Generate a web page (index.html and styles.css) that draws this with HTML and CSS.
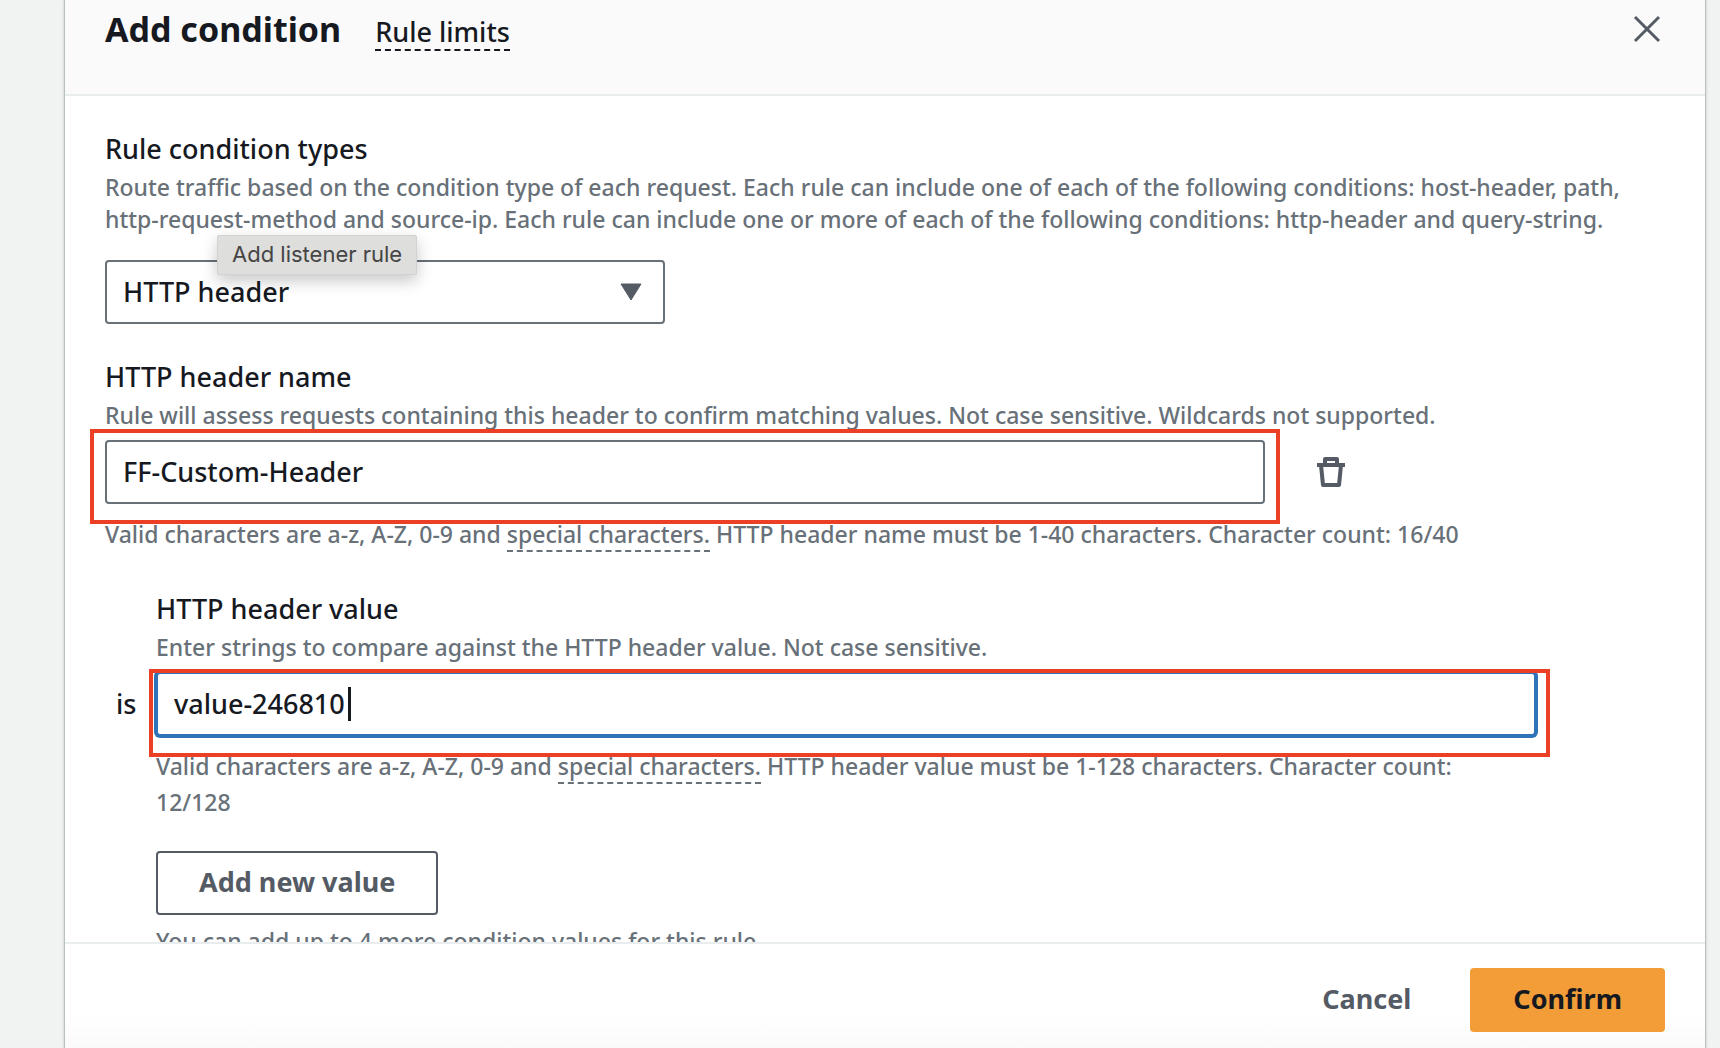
FILE: index.html
```html
<!DOCTYPE html>
<html lang="en">
<head>
<meta charset="utf-8">
<title>Add condition</title>
<link rel="stylesheet" href="styles.css">
</head>
<body>
<div class="modal" role="dialog" aria-labelledby="modal-title">
  <header class="modal-header">
    <h1 class="modal-title" id="modal-title">Add condition</h1>
    <a class="term term-dark" href="#limits">Rule limits</a>
    <button class="icon-button close" type="button" aria-label="Close">
      <svg width="28" height="28" viewBox="0 0 28 28"><path d="M2 2l24 24M26 2L2 26" fill="none" stroke="currentColor" stroke-width="3"/></svg>
    </button>
  </header>

  <main class="modal-body">
    <section class="field">
      <label class="label" for="type">Rule condition types</label>
      <p class="description">Route traffic based on the condition type of each request. Each rule can include one of each of the following conditions: host-header, path,<br>http-request-method and source-ip. Each rule can include one or more of each of the following conditions: http-header and query-string.</p>
      <div class="select-wrap">
        <select class="control" id="type"><option>HTTP header</option></select>
        <svg class="caret-down" width="22" height="18" viewBox="0 0 22 18"><path d="M1 1h20l-10 16z" fill="currentColor" stroke="currentColor" stroke-linejoin="round"/></svg>
        <div class="tooltip" role="tooltip">Add listener rule</div>
      </div>
    </section>

    <section class="field">
      <label class="label" for="name">HTTP header name</label>
      <p class="description">Rule will assess requests containing this header to confirm matching values. Not case sensitive. Wildcards not supported.</p>
      <div class="name-row">
        <div class="input-wrap">
          <input class="control" id="name" type="text" value="FF-Custom-Header">
          <span class="highlight highlight-name"></span>
        </div>
        <button class="icon-button" type="button" aria-label="Remove">
          <svg width="28" height="30" viewBox="0 0 28 30" fill="none" stroke="currentColor" stroke-width="4" stroke-linejoin="round"><path d="M0 8h28M8 8V2h12v6M4 8l2 20h16l2-20"/></svg>
        </button>
      </div>
      <p class="hint">Valid characters are a-z, A-Z, 0-9 and <a class="term" href="#chars">special characters.</a> HTTP header name must be 1-40 characters. Character count: 16/40</p>
    </section>

    <section class="value-group">
      <label class="label" for="value">HTTP header value</label>
      <p class="description">Enter strings to compare against the HTTP header value. Not case sensitive.</p>
      <span class="operator">is</span>
      <div class="input-wrap">
        <input class="control focused" id="value" type="text" value="value-246810">
        <span class="text-cursor"></span>
        <span class="highlight highlight-value"></span>
      </div>
      <p class="hint">Valid characters are a-z, A-Z, 0-9 and <a class="term" href="#chars">special characters.</a> HTTP header value must be 1-128 characters. Character count:<br>12/128</p>
      <button class="button button-normal" type="button">Add new value</button>
      <p class="hint more">You can add up to 4 more condition values for this rule.</p>
    </section>
  </main>

  <footer class="modal-footer">
    <button class="button button-link" type="button">Cancel</button>
    <button class="button button-primary" type="button">Confirm</button>
  </footer>
</div>
</body>
</html>
```

FILE: styles.css
```css
* {
  box-sizing: border-box;
}

body {
  margin: 0;
  background: #f1f3f3;
  color: #16191f;
  font-family: "Noto Sans", "Open Sans", sans-serif;
  font-size: 27px;
  font-weight: 500;
}

.modal {
  display: flex;
  flex-direction: column;
  height: 100vh;
  margin: 0 14px 0 64px;
  border: solid #b9c0c2;
  border-width: 0 1px;
  background: #fff;
  box-shadow: 0 0 3px rgba(0, 28, 36, 0.2);
}

.modal-header {
  display: flex;
  flex: none;
  align-items: baseline;
  gap: 34px;
  height: 96px;
  padding: 4px 40px 0;
  border-bottom: 2px solid #eaeded;
  background: #fafafa;
}

.modal-title {
  margin: 0;
  font-size: 34px;
  font-weight: 700;
  line-height: 50px;
}

.term {
  border-bottom: 2px dashed #687078;
  color: inherit;
  line-height: 1;
  text-decoration: none;
}

.term-dark {
  border-color: #16191f;
  line-height: 34px;
}

.icon-button {
  display: flex;
  align-items: center;
  padding: 0 12px;
  border: 0;
  background: none;
  color: #545b64;
}

.close {
  align-self: flex-start;
  margin-left: auto;
  padding: 11px 4px;
}

.modal-body {
  flex: 1;
  min-height: 0;
  overflow: hidden;
  padding: 32px 40px 0;
}

.field {
  margin-bottom: 32px;
}

.label {
  display: block;
  line-height: 42px;
}

.description,
.hint {
  margin: 1px 0 0;
  color: #687078;
  font-size: 23px;
  line-height: 32px;
}

.hint {
  margin-top: 12px;
  line-height: 36px;
}

.control {
  display: block;
  width: 100%;
  height: 64px;
  padding: 0 16px 2px;
  border: 2px solid #687078;
  border-radius: 4px;
  background: #fff;
  color: inherit;
  font: inherit;
  appearance: none;
}

.select-wrap {
  position: relative;
  max-width: 560px;
  margin-top: 25px;
}

.caret-down {
  position: absolute;
  top: 23px;
  right: 23px;
  color: #545b64;
  pointer-events: none;
}

.tooltip {
  position: absolute;
  top: -25px;
  left: 112px;
  padding: 0 14px 2px;
  border: 1px solid #d2d2d0;
  border-radius: 2px;
  background: #dededc;
  box-shadow: 0 6px 16px rgba(0, 0, 0, 0.22);
  color: #454545;
  font-family: Inter, sans-serif;
  font-size: 22px;
  font-weight: 400;
  line-height: 36px;
  white-space: nowrap;
}

.name-row {
  display: grid;
  grid-template-columns: repeat(12, 1fr);
  gap: 40px;
  margin-top: 9px;
}

.name-row .input-wrap {
  grid-column: span 9;
}

.input-wrap {
  position: relative;
}

.highlight {
  position: absolute;
  border: 4px solid #ec4026;
  pointer-events: none;
}

.highlight-name {
  inset: -11px -15px -20px;
}

.highlight-value {
  inset: -3px -14px -21px -7px;
}

.focused {
  border-color: #2f73b8;
  box-shadow: 0 0 0 2px #2f73b8;
  caret-color: transparent;
  outline: 0;
}

.text-cursor {
  position: absolute;
  top: 15px;
  left: 192px;
  width: 3px;
  height: 34px;
  background: #16191f;
}

.value-group {
  display: grid;
  grid-template-columns: 51px 1fr;
  margin-top: 36px;
  padding-right: 129px;
}

.value-group > * {
  grid-column: 2;
}

.value-group .input-wrap {
  margin-top: 9px;
}

.value-group .operator {
  grid-column: 1;
  align-self: center;
  margin-top: 7px;
  padding-left: 11px;
}

.button {
  height: 64px;
  padding: 0 41px 3px;
  border: 2px solid transparent;
  border-radius: 4px;
  background: none;
  color: #545b64;
  font: inherit;
  font-weight: 700;
}

.button-normal {
  justify-self: start;
  margin-top: 31px;
  border-color: #545b64;
}

.button-primary {
  background: #f29d38;
  color: #16191f;
}

.more {
  margin-top: 8px;
}

.modal-footer {
  display: flex;
  flex: none;
  justify-content: flex-end;
  gap: 16px;
  padding: 24px 40px 16px;
  border-top: 2px solid #eaeded;
  background: linear-gradient(#fff 70%, #fafafa);
}
```
